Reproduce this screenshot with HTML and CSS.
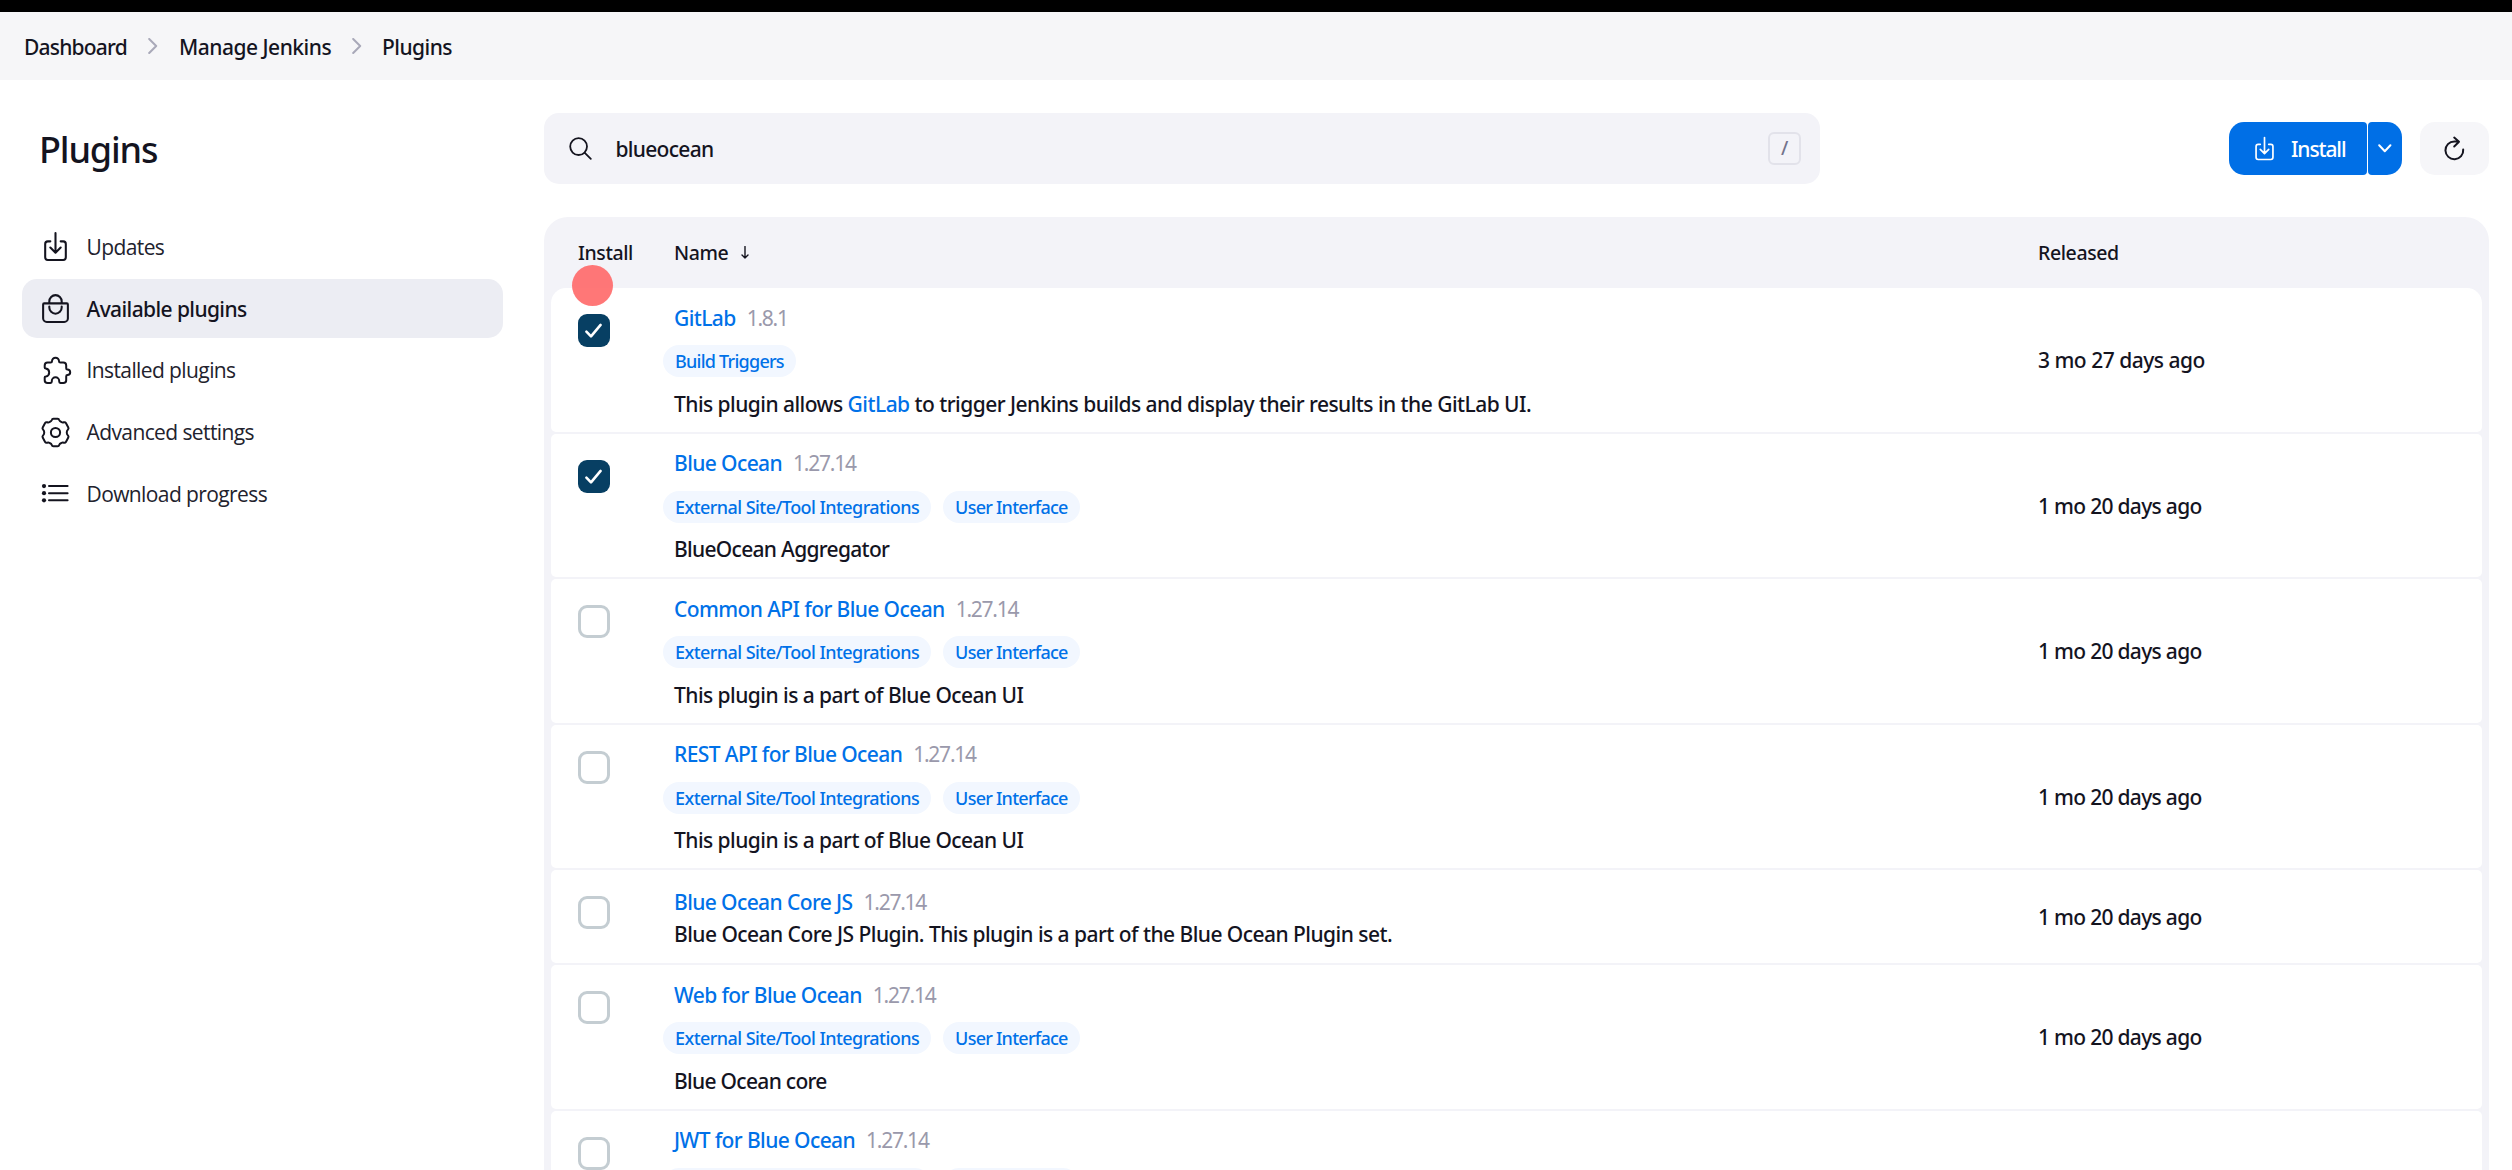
FILE: index.html
```html
<!DOCTYPE html>
<html lang="en">
<head>
<meta charset="utf-8">
<title>Available plugins - Plugins [Jenkins]</title>
<link rel="stylesheet" href="styles.css">
</head>
<body>
<svg class="sprite" aria-hidden="true">
  <symbol id="download" viewBox="0 0 512 512"><path d="M336 176h40a40 40 0 0140 40v208a40 40 0 01-40 40H136a40 40 0 01-40-40V216a40 40 0 0140-40h40M176 272l80 80 80-80M256 48v288"/></symbol>
  <symbol id="check" viewBox="0 0 32 33"><path d="M8.4 17.6l4.6 4.7 9.6-11.4"/></symbol>
</svg>
<div class="topbar"></div>
<nav class="breadcrumbs">
  <a class="crumb crumb-dashboard">Dashboard</a>
  <svg class="chevron" viewBox="0 0 10 16"><path d="M1.2 1l7 7-7 7"/></svg>
  <a class="crumb crumb-manage">Manage Jenkins</a>
  <svg class="chevron" viewBox="0 0 10 16"><path d="M1.2 1l7 7-7 7"/></svg>
  <a class="crumb">Plugins</a>
</nav>
<div class="page">
  <aside class="sidebar">
    <h1>Plugins</h1>
    <nav class="tasks">
      <a class="task"><svg class="icon thick"><use href="#download"/></svg>Updates</a>
      <a class="task active"><svg class="icon thick" viewBox="0 0 512 512"><path d="M80 176a16 16 0 00-16 16v216c0 30.24 25.76 56 56 56h272c30.24 0 56-24.51 56-54.75V192a16 16 0 00-16-16zM160 176v-32a96 96 0 0196-96h0a96 96 0 0196 96v32"/><path d="M160 224v16a96 96 0 0096 96h0a96 96 0 0096-96v-16"/></svg>Available plugins</a>
      <a class="task"><svg class="icon" viewBox="0 0 33 33"><path d="M8.6 8.5H11.6Q13 8.5 13 7.2a3.5 3.5 0 0 1 7 0Q20 8.5 21.4 8.5H24.3Q27.2 8.5 27.2 11.4V14.3Q27.2 15.5 28.4 15.5a2.8 2.8 0 0 1 0 5.6Q27.2 21.1 27.2 22.4V26.2Q27.2 29 24.3 29H21.4Q20.2 29 20.2 27.6V27a3.7 3.7 0 0 0-7.4 0V27.6Q12.8 29 11.5 29H8.6Q5.7 29 5.7 26.2V23.4Q5.7 22.4 6.8 22.4a4 4 0 0 0 0-7.9Q5.7 14.4 5.7 13.4V11.4Q5.7 8.5 8.6 8.5Z"/></svg>Installed plugins</a>
      <a class="task"><svg class="icon" viewBox="0 0 33 33"><path d="M14.4 2.7H18.6Q19.9 2.7 20.2 4Q20.6 5.4 22.4 6Q23.5 6.8 24.8 6.3Q26.2 5.9 26.9 7.1L29.3 11.4Q29.9 12.6 28.9 13.6Q27.6 15 27.8 16.5Q27.6 18 28.9 19.4Q29.9 20.4 29.3 21.6L26.9 25.9Q26.2 27.1 24.8 26.7Q23.5 26.2 22.4 27Q20.6 27.6 20.2 29Q19.9 30.3 18.6 30.3H14.4Q13.1 30.3 12.8 29Q12.4 27.6 10.6 27Q9.5 26.2 8.2 26.7Q6.8 27.1 6.1 25.9L3.7 21.6Q3.1 20.4 4.1 19.4Q5.4 18 5.2 16.5Q5.4 15 4.1 13.6Q3.1 12.6 3.7 11.4L6.1 7.1Q6.8 5.9 8.2 6.3Q9.5 6.8 10.6 6Q12.4 5.4 12.8 4Q13.1 2.7 14.4 2.7Z"/><circle cx="16.5" cy="16.5" r="4.6"/></svg>Advanced settings</a>
      <a class="task"><svg class="icon" viewBox="0 0 33 33"><path d="M10 9.1h18.6M10 16.2h18.6M10 23.3h18.6"/><g class="dots"><circle cx="5" cy="9.1" r="2.1"/><circle cx="5" cy="16.2" r="2.1"/><circle cx="5" cy="23.3" r="2.1"/></g></svg>Download progress</a>
    </nav>
  </aside>
  <main class="main">
    <div class="toolbar">
      <div class="search">
        <svg class="search-icon" viewBox="0 0 23 23"><circle cx="9.6" cy="9.6" r="8.4"/><path d="M15.8 15.8l6 6"/></svg>
        <span class="query">blueocean</span>
        <kbd>/</kbd>
      </div>
      <div class="actions">
        <div class="split">
          <button class="btn install"><svg class="btn-icon"><use href="#download"/></svg>Install</button>
          <button class="btn more"><svg viewBox="0 0 14 9" width="14" height="9"><path d="M1.2 1.3l5.6 5.9 5.6-5.9"/></svg></button>
        </div>
        <button class="refresh"><svg viewBox="0 0 33 33" width="33" height="33"><path d="M25.2 17.5a8.9 8.9 0 1 1-8.9-8.1h4.4M16.2 5.6l4.8 4.1-4.8 4.8"/></svg></button>
      </div>
    </div>
    <div class="table">
      <div class="thead">
        <span>Install</span>
        <span class="sort">Name<svg viewBox="0 0 8 13" width="8" height="13"><path d="M4 .5v11.5M1 9l3 3 3-3"/></svg></span>
        <span>Released</span>
      </div>
      <div class="row">
        <span class="box checked"><svg viewBox="0 0 32 33"><use href="#check"/></svg></span>
        <div class="info">
          <div class="title"><a>GitLab</a><span class="version">1.8.1</span></div>
          <div class="tags"><a class="tag-short">Build Triggers</a></div>
          <p>This plugin allows <a>GitLab</a> to trigger Jenkins builds and display their results in the GitLab UI.</p>
        </div>
        <div class="released">3 mo 27 days ago</div>
      </div>
      <div class="row">
        <span class="box checked"><svg viewBox="0 0 32 33"><use href="#check"/></svg></span>
        <div class="info">
          <div class="title"><a>Blue Ocean</a><span class="version">1.27.14</span></div>
          <div class="tags"><a>External Site/Tool Integrations</a><a class="tag-short">User Interface</a></div>
          <p class="tight">BlueOcean Aggregator</p>
        </div>
        <div class="released tight">1 mo 20 days ago</div>
      </div>
      <div class="row">
        <span class="box"></span>
        <div class="info">
          <div class="title"><a>Common API for Blue Ocean</a><span class="version">1.27.14</span></div>
          <div class="tags"><a>External Site/Tool Integrations</a><a class="tag-short">User Interface</a></div>
          <p>This plugin is a part of Blue Ocean UI</p>
        </div>
        <div class="released tight">1 mo 20 days ago</div>
      </div>
      <div class="row">
        <span class="box"></span>
        <div class="info">
          <div class="title"><a>REST API for Blue Ocean</a><span class="version">1.27.14</span></div>
          <div class="tags"><a>External Site/Tool Integrations</a><a class="tag-short">User Interface</a></div>
          <p>This plugin is a part of Blue Ocean UI</p>
        </div>
        <div class="released tight">1 mo 20 days ago</div>
      </div>
      <div class="row compact">
        <span class="box"></span>
        <div class="info">
          <div class="title"><a>Blue Ocean Core JS</a><span class="version">1.27.14</span></div>
          <p>Blue Ocean Core JS Plugin. This plugin is a part of the Blue Ocean Plugin set.</p>
        </div>
        <div class="released tight">1 mo 20 days ago</div>
      </div>
      <div class="row">
        <span class="box"></span>
        <div class="info">
          <div class="title"><a>Web for Blue Ocean</a><span class="version">1.27.14</span></div>
          <div class="tags"><a>External Site/Tool Integrations</a><a class="tag-short">User Interface</a></div>
          <p class="tight">Blue Ocean core</p>
        </div>
        <div class="released tight">1 mo 20 days ago</div>
      </div>
      <div class="row last">
        <span class="box"></span>
        <div class="info">
          <div class="title"><a>JWT for Blue Ocean</a><span class="version">1.27.14</span></div>
          <div class="tags"><a class="blank-wide"></a><a class="blank-short"></a></div>
        </div>
      </div>
    </div>
  </main>
</div>
<div class="pointer"></div>
</body>
</html>
```
FILE: styles.css
```css
* { box-sizing: border-box; }

html, body { height: 100%; }

body {
  display: flex;
  flex-direction: column;
  margin: 0;
  overflow: hidden;
  background: #fff;
  color: #14141f;
  font: 500 21px/32px "Noto Sans", sans-serif;
  letter-spacing: -0.54px;
  white-space: nowrap;
}

svg {
  display: block;
  flex: none;
  fill: none;
  stroke: currentColor;
  stroke-width: 2;
  stroke-linecap: round;
  stroke-linejoin: round;
}

button {
  border: 0;
  padding: 0;
  font: inherit;
  letter-spacing: inherit;
}

.sprite { position: absolute; width: 0; height: 0; }

.topbar { flex: none; height: 12px; background: #000; }

.breadcrumbs {
  display: flex;
  flex: none;
  align-items: center;
  height: 68px;
  padding-left: 24px;
  background: #f6f6f8;
}
.crumb { padding-top: 2px; }
.crumb-dashboard { width: 102px; letter-spacing: -0.8px; }
.crumb-manage { width: 152px; letter-spacing: -0.5px; }
.chevron { width: 10px; height: 16px; margin: -1px 20px 0 21px; color: #a9a9b9; }
.crumb-dashboard + .chevron { margin: -1px 21px 0 22px; }

.page { display: flex; flex: 1; min-height: 0; }

.sidebar { flex: none; width: 503px; padding: 44px 0 0 22px; }
h1 {
  margin: 0;
  padding-left: 17px;
  font-size: 36px;
  font-weight: 500;
  line-height: 52px;
  letter-spacing: -1.15px;
}
.tasks { display: flex; flex-direction: column; gap: 2.75px; margin-top: 41.25px; }
.task {
  display: flex;
  align-items: center;
  gap: 14.5px;
  height: 59px;
  padding-left: 17px;
  border-radius: 15px;
  font-family: "Open Sans", sans-serif;
  font-weight: 400;
  letter-spacing: -0.6px;
  color: #22222d;
}
.task.active {
  background: #ecedf3;
  color: #14141f;
  font-family: "Noto Sans", sans-serif;
  font-weight: 500;
}
.icon { width: 33px; height: 33px; color: #14141f; }
.thick { stroke-width: 32; }
.dots { fill: currentColor; stroke: none; }

.main {
  display: flex;
  flex: none;
  flex-direction: column;
  width: 1945px;
  margin-left: 41px;
  padding-top: 33px;
}
.toolbar {
  display: flex;
  flex: none;
  align-items: center;
  justify-content: space-between;
  height: 71px;
}
.search {
  display: flex;
  align-items: center;
  width: 1276px;
  height: 71px;
  padding: 0 19px 0 25px;
  border-radius: 15px;
  background: #f3f3f8;
}
.search-icon { width: 23px; height: 23px; stroke-width: 1.8; margin-right: 23.5px; }
.query { letter-spacing: -0.7px; }
kbd {
  width: 33px;
  height: 33px;
  margin-left: auto;
  border: 2px solid #e2e2ea;
  border-radius: 6px;
  color: #73738c;
  font: 500 19px/28px "Noto Sans", sans-serif;
  text-align: center;
}
.actions { display: flex; gap: 18px; }
.split { display: flex; gap: 1px; }
.btn { display: flex; align-items: center; height: 53px; background: #006fe6; color: #fff; }
.install {
  width: 138px;
  padding-left: 22px;
  gap: 13px;
  border-radius: 15px 4px 4px 15px;
  letter-spacing: -1.1px;
}
.btn-icon { width: 27px; height: 27px; stroke-width: 32; }
.more { width: 34px; justify-content: center; border-radius: 4px 15px 15px 4px; }
.refresh {
  display: flex;
  align-items: center;
  justify-content: center;
  width: 69px;
  height: 53px;
  border-radius: 15px;
  background: #f6f6f9;
  color: #14141f;
}

.table {
  display: flex;
  flex: 1;
  flex-direction: column;
  gap: 2px;
  min-height: 0;
  margin-top: 33px;
  padding: 0 7px;
  border-radius: 24px 24px 0 0;
  background: #f3f3f8;
}
.thead, .row {
  display: grid;
  flex: none;
  grid-template-columns: 96px 1364px auto;
  padding-left: 27px;
}
.thead {
  height: 69px;
  align-items: center;
  padding-top: 2px;
  font-size: 19.5px;
  letter-spacing: -0.4px;
}
.sort { display: flex; align-items: center; gap: 13px; }
.sort svg { stroke-width: 1.4; }

.row { height: 143.5px; border-radius: 5px; background: #fff; }
.thead + .row { border-radius: 15px 15px 5px 5px; }
.row.compact { height: 93px; }
.row.last { flex: 1; min-height: 0; border-radius: 5px 5px 0 0; overflow: hidden; }
.box { width: 32px; height: 33px; margin-top: 26px; border: 3px solid #c4cdd2; border-radius: 9px; }
.box.checked { border: 0; background: #073f63; color: #fff; }
.box svg { stroke-width: 2.6; }
.info { padding-top: 13.5px; }
.compact .info { padding-top: 15.5px; }
.title { display: flex; height: 32px; }
.title a { letter-spacing: -0.6px; }
.title a, .info p a { color: #0071e8; }
.version { margin-left: 11px; color: #9a99ab; font-weight: 400; letter-spacing: -1.25px; }
.tags { display: flex; gap: 12px; margin: 11.5px 0 10.5px -11px; }
.tags a {
  height: 32px;
  padding: 0 12px;
  border-radius: 16px;
  background: #f2f7ff;
  color: #0071e8;
  font-size: 18px;
  letter-spacing: -0.56px;
}
.tags .tag-short { letter-spacing: -0.75px; }
.tags .blank-wide { width: 268px; }
.tags .blank-short { width: 136px; }
.info p { margin: 0; }
.released { align-self: center; padding-top: 1px; letter-spacing: -0.5px; }
.info .tight, .released.tight { letter-spacing: -0.7px; }

/* click indicator floating over the page */
.pointer {
  position: absolute;
  left: 572px;
  top: 265px;
  width: 41px;
  height: 41px;
  border-radius: 50%;
  background: rgba(255, 104, 104, 0.9);
}
```
